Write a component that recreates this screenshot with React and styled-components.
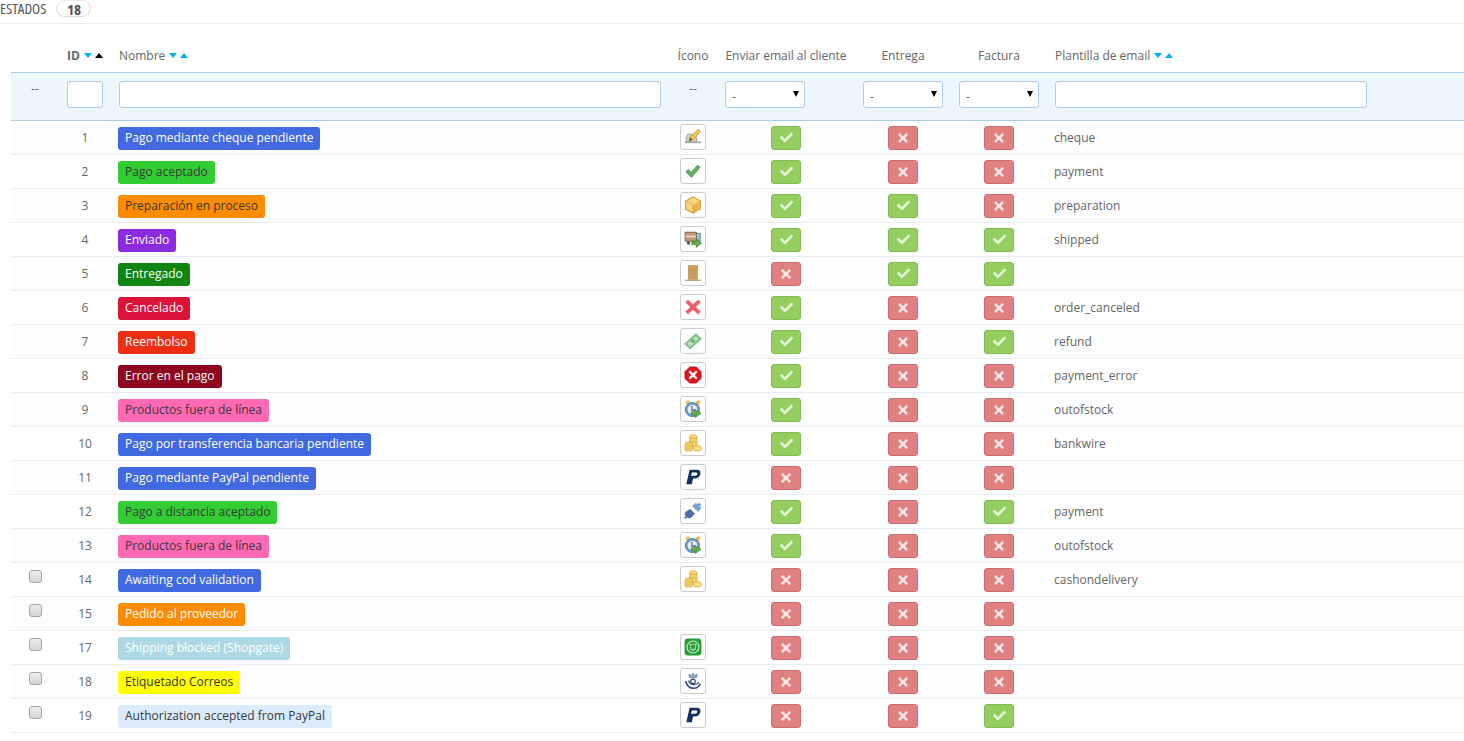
import React from 'react';
import styled, { createGlobalStyle } from 'styled-components';
import { FaCheck, FaTimes } from 'react-icons/fa';

const GlobalStyle = createGlobalStyle`
    html, body {
        margin: 0;
        background: #fff;
        overflow: hidden;
    }
    body {
        font-family: "Open Sans", "Liberation Sans", sans-serif;
        font-size: 12px;
        color: #666;
    }
`;

// Status icons, drawn on a 16 unit grid
const Svg = ({ children }) => (
    <svg width="18" height="18" viewBox="0 0 16 16">
        {children}
    </svg>
);

const PayPalIcon = () => (
    <Svg>
        <path d="M5 1.500h6.500c2.600 0 3.600 1.800 3 4-.6 2.400-2.500 3.800-5 3.800H8L7 14.500H2z" fill="#143261" />
        <path d="M7 4h3.700c1 0 1.300.7 1.100 1.400-.3.900-1 1.400-2 1.400H6.300z" fill="#fff" />
    </Svg>
);

const ClockIcon = () => (
    <Svg>
        <circle cx="3.500" cy="2.500" r="2" fill="#e8c04e" />
        <circle cx="12.500" cy="2.500" r="2" fill="#e8c04e" />
        <circle cx="7.500" cy="8.500" r="6.300" fill="#6f9ccb" stroke="#4d7aa8" strokeWidth=".8" />
        <circle cx="7.500" cy="8.500" r="4.300" fill="#e6eef6" />
        <path d="M7 5v4h3" fill="none" stroke="#44505c" strokeWidth=".9" />
        <path d="M6.500 10.500h3.500V8.200l5 3.700-5 3.700v-2.300H6.500z" fill="#62ad4e" stroke="#3d7f33" strokeWidth=".6" />
    </Svg>
);

const CoinsIcon = () => (
    <Svg>
        <rect x="5" y="1" width="6.500" height="10" rx="1.400" fill="#f4d365" stroke="#d4a93c" strokeWidth=".7" />
        <path d="M5 4h6.500M5 7h6.500" stroke="#d4a93c" strokeWidth=".6" />
        <rect x="1" y="7.500" width="6.500" height="7.500" rx="1.400" fill="#f4d365" stroke="#d4a93c" strokeWidth=".7" />
        <path d="M1 10h6.500M1 12.500h6.500" stroke="#d4a93c" strokeWidth=".6" />
        <rect x="8.500" y="10.500" width="6.800" height="4.500" rx="2" fill="#f8df80" stroke="#d4a93c" strokeWidth=".7" />
    </Svg>
);

const icons = {
    cheque: (
        <Svg>
            <path d="M3 5.500h7.500l1 6.500H1.500z" fill="#cfcfca" stroke="#999994" strokeWidth=".7" />
            <path d="M.8 12h14.400v1.500H.8z" fill="#a8a8a4" />
            <path d="M4.500 11.500l1-3.200 6.300-6.500c.7-.7 1.500-.5 2.100.1.600.6.700 1.400 0 2.100l-6.300 6.500z" fill="#f6c850" stroke="#c48d2c" strokeWidth=".7" />
            <path d="M4.500 11.500l1-3.200 2.100 2.100z" fill="#6b5436" />
        </Svg>
    ),
    check: (
        <Svg>
            <path d="M1.500 8.500l2.300-2 2.700 2.700 5.500-6.500 2.500 2-8 9.200z" fill="#64ab67" stroke="#479150" strokeWidth=".5" />
        </Svg>
    ),
    box: (
        <Svg>
            <path d="M8 .8l6.600 3.600v7.200L8 15.200l-6.600-3.600V4.400z" fill="#f7d478" stroke="#d39a32" strokeWidth=".9" />
            <path d="M8 8l6.600-3.600v7.200L8 15.200z" fill="#e9b352" />
            <path d="M1.400 4.400L8 8v7.200" fill="none" stroke="#d39a32" strokeWidth=".6" />
        </Svg>
    ),
    truck: (
        <Svg>
            <path d="M9 3h5.500v7H9z" fill="#9ec3e6" stroke="#4f7ea8" strokeWidth=".8" />
            <path d="M1 2h10v8H1z" fill="#c39a70" stroke="#7d5c3c" strokeWidth=".8" />
            <path d="M1.500 5h9v1.500h-9z" fill="#eadfce" />
            <circle cx="4" cy="11.500" r="1.500" fill="#555" />
            <path d="M7 10h4V7.500l4.500 4-4.500 4V13H7z" fill="#62ad4e" stroke="#3d7f33" strokeWidth=".6" />
        </Svg>
    ),
    door: (
        <Svg>
            <path d="M4 1.500h8v12H4z" fill="#d2a468" stroke="#b98a4c" strokeWidth=".7" />
            <path d="M5.500 3h5v9.500h-5z" fill="#c99a5c" />
            <path d="M1 14h14v.8H1z" fill="#9a7a48" />
        </Svg>
    ),
    cross: (
        <Svg>
            <path d="M3.500 1.500L8 5.500l4.500-4 2.200 2.200-4.200 4.300 4.200 4.300-2.200 2.200L8 10.500l-4.500 4-2.200-2.200L5.500 8 1.300 3.700z" fill="#ea5f66" stroke="#f3a0a3" strokeWidth=".5" />
        </Svg>
    ),
    money: (
        <Svg>
            <path d="M.6 10.500L10.500 1.500l4.900 4.400L5.500 15z" fill="#8cc78e" stroke="#68a86c" strokeWidth=".7" />
            <path d="M3 10.500l7.500-6.800 2.500 2.300-7.500 6.800z" fill="#b9e0b5" />
            <circle cx="8" cy="8.200" r="1.600" fill="#68a86c" />
        </Svg>
    ),
    error: (
        <Svg>
            <path d="M5 .8h6L15.200 5v6L11 15.200H5L.8 11V5z" fill="#e2141c" stroke="#b40c12" strokeWidth=".6" />
            <path d="M5.300 4L8 6.500 10.700 4 12 5.300 9.500 8l2.500 2.700-1.300 1.300L8 9.500 5.300 12 4 10.700 6.500 8 4 5.300z" fill="#fff" />
        </Svg>
    ),
    clock: <ClockIcon />,
    coins: <CoinsIcon />,
    paypal: <PayPalIcon />,
    plug: (
        <Svg>
            <path d="M10.500 1l1.500 1.200L13.500.8l1.700 1.700-1.400 1.500 1.200 1.500-2.500 3-5-5z" fill="#7ba3db" stroke="#5a83bd" strokeWidth=".4" />
            <path d="M5.500 6.500l4 4-3 3c-1.200 1-2.800.8-4 0l-1.300 1.300-.8-.8 1.300-1.300c-.8-1.200-1-2.800 0-4z" fill="#4a6fa8" stroke="#35588f" strokeWidth=".4" />
        </Svg>
    ),
    shopgate: (
        <Svg>
            <rect x=".5" y=".5" width="15" height="15" rx="3" fill="#2a9c34" />
            <circle cx="8" cy="8" r="5.300" fill="none" stroke="#c8eccb" strokeWidth="1" />
            <path d="M5.300 5.500h5.400l-.7 4.500H6z" fill="none" stroke="#a8e0ad" strokeWidth=".9" />
            <path d="M7 11h2" stroke="#a8e0ad" strokeWidth="1" />
        </Svg>
    ),
    post: (
        <Svg>
            <path d="M5 5l-.8-3 2 1L8 1l1.800 2 2-1-.8 3z" fill="#8aa6c4" stroke="#4f719b" strokeWidth=".5" />
            <path d="M1.500 8c1 4 3.500 6.500 7 6.500 3 0 5-1.500 6-4" fill="none" stroke="#28497c" strokeWidth="1.400" />
            <path d="M4 7.500c1 2.500 2.500 3.800 5 3.800 2 0 3.500-.8 4.500-2" fill="none" stroke="#28497c" strokeWidth="1.100" />
            <circle cx="8" cy="8.300" r="2" fill="none" stroke="#28497c" strokeWidth="1" />
        </Svg>
    ),
};

const states = [
    { id: 1, name: 'Pago mediante cheque pendiente', color: '#4169e1', icon: 'cheque', email: true, delivery: false, invoice: false, template: 'cheque' },
    { id: 2, name: 'Pago aceptado', color: '#32cd32', dark: true, icon: 'check', email: true, delivery: false, invoice: false, template: 'payment' },
    { id: 3, name: 'Preparación en proceso', color: '#ff8c00', dark: true, icon: 'box', email: true, delivery: true, invoice: false, template: 'preparation' },
    { id: 4, name: 'Enviado', color: '#8a2be2', icon: 'truck', email: true, delivery: true, invoice: true, template: 'shipped' },
    { id: 5, name: 'Entregado', color: '#108510', icon: 'door', email: false, delivery: true, invoice: true, template: '' },
    { id: 6, name: 'Cancelado', color: '#dc143c', icon: 'cross', email: true, delivery: false, invoice: false, template: 'order_canceled' },
    { id: 7, name: 'Reembolso', color: '#ec2e15', icon: 'money', email: true, delivery: false, invoice: true, template: 'refund' },
    { id: 8, name: 'Error en el pago', color: '#8f0621', icon: 'error', email: true, delivery: false, invoice: false, template: 'payment_error' },
    { id: 9, name: 'Productos fuera de línea', color: '#ff69b4', dark: true, icon: 'clock', email: true, delivery: false, invoice: false, template: 'outofstock' },
    { id: 10, name: 'Pago por transferencia bancaria pendiente', color: '#4169e1', icon: 'coins', email: true, delivery: false, invoice: false, template: 'bankwire' },
    { id: 11, name: 'Pago mediante PayPal pendiente', color: '#4169e1', icon: 'paypal', email: false, delivery: false, invoice: false, template: '' },
    { id: 12, name: 'Pago a distancia aceptado', color: '#32cd32', dark: true, icon: 'plug', email: true, delivery: false, invoice: true, template: 'payment' },
    { id: 13, name: 'Productos fuera de línea', color: '#ff69b4', dark: true, icon: 'clock', email: true, delivery: false, invoice: false, template: 'outofstock' },
    { id: 14, name: 'Awaiting cod validation', color: '#4169e1', icon: 'coins', email: false, delivery: false, invoice: false, template: 'cashondelivery', removable: true },
    { id: 15, name: 'Pedido al proveedor', color: '#ff8c00', email: false, delivery: false, invoice: false, template: '', removable: true },
    { id: 17, name: 'Shipping blocked (Shopgate)', color: '#add8e6', icon: 'shopgate', email: false, delivery: false, invoice: false, template: '', removable: true },
    { id: 18, name: 'Etiquetado Correos', color: '#ffff00', dark: true, icon: 'post', email: false, delivery: false, invoice: false, template: '', removable: true },
    { id: 19, name: 'Authorization accepted from PayPal', color: '#dcebfb', dark: true, icon: 'paypal', email: false, delivery: false, invoice: true, template: '', removable: true },
];

const Heading = styled.div`
    height: 24px;
    box-sizing: border-box;
    border-bottom: 1px solid #eee;
    display: flex;
    align-items: flex-start;
    gap: 10px;
    font-stretch: 75%;
    font-size: 15px;
    color: #555;
`;

const HeadingTitle = styled.span`
    line-height: 16px;
`;

const Count = styled.span`
    width: 35px;
    height: 17px;
    border: 1px solid #ddd;
    border-top-color: #eee;
    border-radius: 9px;
    box-sizing: border-box;
    text-align: center;
    font-weight: bold;
    font-size: 15px;
    line-height: 16px;
    color: #555;
`;

const Table = styled.table`
    margin-left: 11px;
    width: 1453px;
    table-layout: fixed;
    border-collapse: separate;
    border-spacing: 0;
`;

const HeadCell = styled.th`
    height: 48px;
    padding: 15px 8px 0;
    box-sizing: border-box;
    font-weight: ${(p) => (p.$bold ? 'bold' : 'normal')};
    font-size: 12px;
    color: #666;
    text-align: ${(p) => (p.$center ? 'center' : 'left')};
    white-space: nowrap;
`;

const Sort = styled.span`
    display: inline-block;
    margin-left: ${(p) => (p.$first ? '4px' : '3px')};
    vertical-align: 2px;
    border-left: 4px solid transparent;
    border-right: 4px solid transparent;
    ${(p) => (p.$up ? 'border-bottom' : 'border-top')}: 5px solid ${(p) => (p.$active ? '#000' : '#00aff0')};
`;

const FilterCell = styled.td`
    height: 49px;
    box-sizing: border-box;
    padding: 8px 8px 0;
    vertical-align: top;
    background: #ecf6fb;
    border-top: 1px solid #a9cfe6;
    border-bottom: 1px solid #a9cfe6;
    text-align: ${(p) => (p.$center ? 'center' : 'left')};
    line-height: 16px;
`;

const TextFilter = styled.input`
    display: block;
    width: 100%;
    height: 27px;
    box-sizing: border-box;
    border: 1px solid #a9cfe6;
    border-radius: 3px;
    background: #fff;
`;

const SelectBox = styled.div`
    position: relative;
    width: 80px;

    &::after {
        content: '';
        position: absolute;
        top: 10px;
        right: 6px;
        border-left: 3px solid transparent;
        border-right: 3px solid transparent;
        border-top: 6px solid #000;
    }
`;

const SelectFilter = styled.select`
    display: block;
    width: 100%;
    height: 27px;
    padding: 4px 0 0 6px;
    box-sizing: border-box;
    appearance: none;
    border: 1px solid #a9cfe6;
    border-radius: 3px;
    background: #fff;
    font-family: inherit;
    font-size: 12px;
    color: #666;
`;

const Row = styled.tr`
    height: 34px;
    background: ${(p) => (p.$odd ? '#fcfdfe' : '#fff')};
`;

const Cell = styled.td`
    height: 34px;
    box-sizing: border-box;
    padding: 0 8px;
    border-bottom: 1px solid #eaedef;
    text-align: ${(p) => (p.$center ? 'center' : 'left')};
    color: #666;
    white-space: nowrap;
`;

const NameCell = styled(Cell)`
    padding: 2px 0 0 7px;
`;

const TemplateCell = styled(Cell)`
    padding-left: 7px;
`;

const Tick = styled.input`
    display: block;
    appearance: none;
    width: 13px;
    height: 13px;
    margin: -6px 0 0 10px;
    border: 1px solid #a5a5a5;
    border-radius: 3px;
    background: linear-gradient(#eee, #d4d4d4);
`;

const Badge = styled.span`
    display: inline-block;
    height: 23px;
    line-height: 22px;
    padding: 0 7px;
    border-radius: 3px;
    background: ${(p) => p.$color};
    color: ${(p) => (p.$dark ? '#383838' : '#fff')};
    vertical-align: middle;
`;

const IconBox = styled.span`
    display: flex;
    align-items: center;
    justify-content: center;
    width: 26px;
    height: 26px;
    margin: -1px auto 0;
    box-sizing: border-box;
    border: 1px solid #ccc;
    border-radius: 3px;
    background: #fff;
`;

const Flag = styled.span`
    display: flex;
    align-items: center;
    justify-content: center;
    width: 30px;
    height: 24px;
    margin: 0 auto;
    box-sizing: border-box;
    border-radius: 3px;
    font-size: ${(p) => (p.$on ? '13px' : '14px')};
    border: 1px solid ${(p) => (p.$on ? '#82b95a' : '#cf6d6d')};
    background: ${(p) => (p.$on ? '#93ce5f' : '#e08080')};
    color: ${(p) => (p.$on ? '#e4f5d4' : '#fbe4e4')};
`;

const SortArrows = ({ active }) => (
    <>
        <Sort $first />
        <Sort $up $active={active} />
    </>
);

const FlagCell = ({ on }) => (
    <Cell $center>
        <Flag $on={on}>{on ? <FaCheck /> : <FaTimes />}</Flag>
    </Cell>
);

const SelectCell = () => (
    <FilterCell>
        <SelectBox>
            <SelectFilter defaultValue="-">
                <option>-</option>
            </SelectFilter>
        </SelectBox>
    </FilterCell>
);

export default function App() {
    return (
        <>
            <GlobalStyle />
            <Heading>
                <HeadingTitle>ESTADOS</HeadingTitle>
                <Count>18</Count>
            </Heading>
            <Table>
                <colgroup>
                    <col width="48" />
                    <col width="52" />
                    <col width="558" />
                    <col width="48" />
                    <col width="138" />
                    <col width="96" />
                    <col width="96" />
                    <col width="328" />
                    <col />
                </colgroup>
                <thead>
                    <tr>
                        <HeadCell />
                        <HeadCell $bold>
                            ID
                            <SortArrows active />
                        </HeadCell>
                        <HeadCell>
                            Nombre
                            <SortArrows />
                        </HeadCell>
                        <HeadCell $center>Ícono</HeadCell>
                        <HeadCell $center>Enviar email al cliente</HeadCell>
                        <HeadCell $center>Entrega</HeadCell>
                        <HeadCell $center>Factura</HeadCell>
                        <HeadCell>
                            Plantilla de email
                            <SortArrows />
                        </HeadCell>
                        <HeadCell />
                    </tr>
                    <tr>
                        <FilterCell $center>--</FilterCell>
                        <FilterCell>
                            <TextFilter />
                        </FilterCell>
                        <FilterCell>
                            <TextFilter />
                        </FilterCell>
                        <FilterCell $center>--</FilterCell>
                        <SelectCell />
                        <SelectCell />
                        <SelectCell />
                        <FilterCell>
                            <TextFilter />
                        </FilterCell>
                        <FilterCell />
                    </tr>
                </thead>
                <tbody>
                    {states.map((state, i) => (
                        <Row key={state.id} $odd={i % 2 === 0}>
                            <Cell>{state.removable && <Tick type="checkbox" />}</Cell>
                            <Cell $center>{state.id}</Cell>
                            <NameCell>
                                <Badge $color={state.color} $dark={state.dark}>
                                    {state.name}
                                </Badge>
                            </NameCell>
                            <Cell $center>{state.icon && <IconBox>{icons[state.icon]}</IconBox>}</Cell>
                            <FlagCell on={state.email} />
                            <FlagCell on={state.delivery} />
                            <FlagCell on={state.invoice} />
                            <TemplateCell>{state.template}</TemplateCell>
                            <Cell />
                        </Row>
                    ))}
                </tbody>
            </Table>
        </>
    );
}
